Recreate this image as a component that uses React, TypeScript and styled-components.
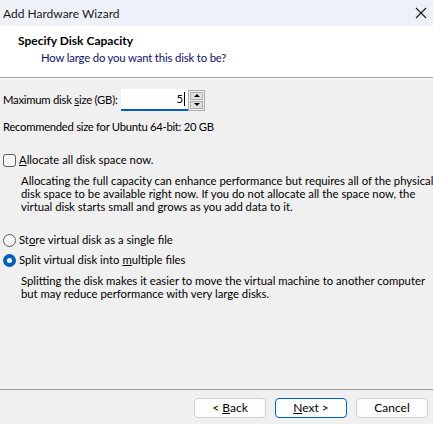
import React from "react";
import styled, { createGlobalStyle } from "styled-components";

const Global = createGlobalStyle`
  html, body { margin: 0; padding: 0; background: #f0f0f0; }
  body { font-family: Lato, "Liberation Sans", Arial, sans-serif; font-size: 11.3px; color: #000; }
  * { box-sizing: border-box; }
`;

const Window = styled.div`
  width: 433px;
  height: 424px;
  display: flex;
  flex-direction: column;
  background: #f0f0f0;
  overflow: hidden;
  white-space: nowrap;
`;

const TitleBar = styled.div`
  height: 26px;
  flex: none;
  display: flex;
  align-items: center;
  justify-content: space-between;
  padding: 0 6px 0 3px;
  background: #eef1f7;
  font-size: 12px;
  color: #1a1a1a;
`;

const CloseIcon = styled.svg`
  width: 12px;
  height: 12px;
  display: block;
`;

const Header = styled.div`
  height: 52px;
  flex: none;
  background: #ffffff;
  border-bottom: 1px solid #a0a0a0;
  padding: 8px 0 0 18px;
  display: flex;
  flex-direction: column;
  gap: 3px;
`;

const HeaderTitle = styled.div`
  font-weight: bold;
  font-size: 12px;
  line-height: 14px;
`;

const HeaderSub = styled.div`
  padding-left: 23px;
  line-height: 14px;
  color: #10106a;
  letter-spacing: -0.15px;
`;

const Content = styled.div`
  flex: 1;
  display: flex;
  flex-direction: column;
  padding: 10px 3px 0 3px;
  border-top: 1px solid #ffffff;
`;

const SizeRow = styled.div`
  display: flex;
  align-items: center;
  height: 22px;
`;

const Label = styled.span`
  width: 118px;
  flex: none;
  line-height: 14px;
  letter-spacing: -0.25px;
`;

const U = styled.span`
  text-decoration: underline;
`;

const NumberBox = styled.div`
  width: 67px;
  height: 22px;
  background: #fff;
  border-bottom: 2px solid #005fb8;
  display: flex;
  align-items: center;
  justify-content: flex-end;
  padding-right: 3px;
  line-height: 14px;
`;

const Caret = styled.span`
  display: inline-block;
  width: 1px;
  height: 14px;
  background: #000;
  margin-left: 1px;
`;

const Spinner = styled.div`
  width: 17px;
  height: 21px;
  border: 1px solid #adadad;
  display: flex;
  flex-direction: column;
  gap: 1px;
  padding: 1px;
  background: #f0f0f0;
`;

const SpinBtn = styled.div`
  flex: 1;
  background: #e1e1e1;
  border: 1px solid #adadad;
  display: flex;
  align-items: center;
  justify-content: center;
`;

const Arrow = styled.div<{ $up?: boolean }>`
  width: 0;
  height: 0;
  border-left: 3px solid transparent;
  border-right: 3px solid transparent;
  ${(p) => (p.$up ? "border-bottom: 3px solid #000;" : "border-top: 3px solid #000;")}
`;

const Para = styled.div<{ $mt?: number; $indent?: number; $tight?: boolean }>`
  margin-top: ${(p) => p.$mt ?? 0}px;
  padding-left: ${(p) => p.$indent ?? 0}px;
  line-height: 13px;
  letter-spacing: ${(p) => (p.$tight ? "-0.3px" : "0")};
`;

const OptionRow = styled.label<{ $mt?: number }>`
  display: flex;
  align-items: center;
  gap: 3px;
  height: 14px;
  margin-top: ${(p) => p.$mt ?? 0}px;
  line-height: 14px;
`;

const CheckBox = styled.span`
  width: 13px;
  height: 13px;
  border: 1px solid #5c5c5c;
  border-radius: 3px;
  background: #f7f7f7;
  flex: none;
`;

const Radio = styled.span<{ $on?: boolean }>`
  width: 13px;
  height: 13px;
  border-radius: 50%;
  flex: none;
  box-sizing: border-box;
  ${(p) =>
    p.$on
      ? "background: #fff; border: 4px solid #005fb8;"
      : "background: #f7f7f7; border: 1px solid #5c5c5c;"}
`;

const Footer = styled.div`
  height: 35px;
  flex: none;
  border-top: 1px solid #a0a0a0;
  display: flex;
  justify-content: flex-end;
  align-items: flex-start;
  gap: 9px;
  padding: 8px 5px 0 0;
`;

const Button = styled.button<{ $primary?: boolean }>`
  width: 72px;
  height: 20px;
  border-radius: 4px;
  background: #fdfdfd;
  border: 1px solid ${(p) => (p.$primary ? "#0067c0" : "#d0d0d0")};
  font-family: inherit;
  font-size: 12px;
  color: #000;
  padding: 0;
  line-height: 14px;
`;

export default function App() {
  return (
    <>
      <Global />
      <Window>
        <TitleBar>
          <span>Add Hardware Wizard</span>
          <CloseIcon viewBox="0 0 12 12">
            <path d="M1 1 L11 11 M11 1 L1 11" stroke="#1a1a1a" strokeWidth="1.1" fill="none" />
          </CloseIcon>
        </TitleBar>
        <Header>
          <HeaderTitle>Specify Disk Capacity</HeaderTitle>
          <HeaderSub>How large do you want this disk to be?</HeaderSub>
        </Header>
        <Content>
          <SizeRow>
            <Label>
              Maximum disk <U>s</U>ize (GB):
            </Label>
            <NumberBox>
              5<Caret />
            </NumberBox>
            <Spinner>
              <SpinBtn>
                <Arrow $up />
              </SpinBtn>
              <SpinBtn>
                <Arrow />
              </SpinBtn>
            </Spinner>
          </SizeRow>
          <Para $mt={9} $tight>
            Recommended size for Ubuntu 64-bit: 20 GB
          </Para>
          <OptionRow $mt={20}>
            <CheckBox />
            <span>
              <U>A</U>llocate all disk space now.
            </span>
          </OptionRow>
          <Para $mt={7} $indent={18}>
            Allocating the full capacity can enhance performance but requires all of the physical
            <br />
            disk space to be available right now. If you do not allocate all the space now, the
            <br />
            virtual disk starts small and grows as you add data to it.
          </Para>
          <OptionRow $mt={20}>
            <Radio />
            <span>
              St<U>o</U>re virtual disk as a single file
            </span>
          </OptionRow>
          <OptionRow $mt={6}>
            <Radio $on />
            <span>
              Split virtual disk into <U>m</U>ultiple files
            </span>
          </OptionRow>
          <Para $mt={7} $indent={18}>
            Splitting the disk makes it easier to move the virtual machine to another computer
            <br />
            but may reduce performance with very large disks.
          </Para>
        </Content>
        <Footer>
          <Button>
            &lt; <U>B</U>ack
          </Button>
          <Button $primary>
            <U>N</U>ext &gt;
          </Button>
          <Button>Cancel</Button>
        </Footer>
      </Window>
    </>
  );
}
